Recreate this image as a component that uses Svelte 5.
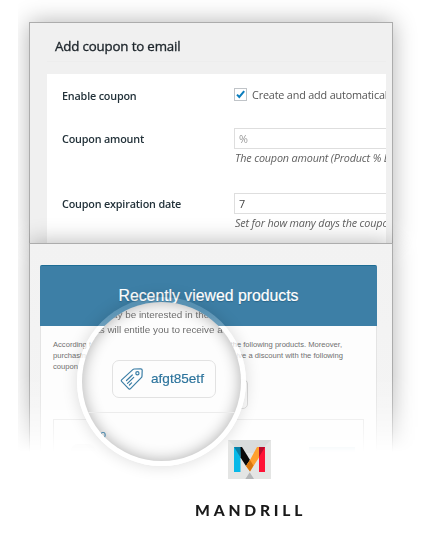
<script>
  const settings = [
    { id: 'enable', label: 'Enable coupon', check: 'Create and add automatical' },
    { id: 'amount', label: 'Coupon amount', value: '%', hint: 'The coupon amount (Product % D', muted: true },
    { id: 'expiry', label: 'Coupon expiration date', value: '7', hint: 'Set for how many days the coupo' }
  ];
</script>

<main>
  <div class="sheets">
    <section class="panel settings">
      <h1><span>Add coupon to email</span></h1>
      <div class="form">
        {#each settings as row (row.id)}
          <div class="row {row.id}">
            <div class="label">{row.label}</div>
            <div class="control">
              {#if row.check}
                <div class="check">
                  <svg width="13" height="13" viewBox="0 0 13 13">
                    <rect x=".5" y=".5" width="12" height="12" fill="#fff" stroke="#c0c4c8" />
                    <path d="M3 6.6 5.3 9 10.2 3.2" fill="none" stroke="#0b7dbd" stroke-width="2" />
                  </svg>
                  <span>{row.check}</span>
                </div>
              {:else}
                <div class="input" class:muted={row.muted}>{row.value}</div>
                <div class="hint">{row.hint}</div>
              {/if}
            </div>
          </div>
        {/each}
      </div>
    </section>

    <section class="panel mail">
      <div class="letter">
        <h2><span>Recently viewed products</span></h2>
        <div class="copy">
          <div class="line"><span>According t</span><span class="b">the following products. Moreover,</span></div>
          <div class="line"><span>purchasing</span><span>eive a discount with the following</span></div>
          <div class="line"><span>coupon</span></div>
        </div>
        <div class="code"></div>
        <div class="products"><i class="thumb"></i><i class="button"></i></div>
      </div>
    </section>
  </div>

  <div class="lens">
    <div class="glass">
      <p class="p1">ay be interested in the</p>
      <p class="p2">ts will entitle you to receive a</p>
      <div class="coupon">
        <svg width="24" height="24" viewBox="0 0 24 24" fill="none" stroke="#3b7ea6" stroke-width="1.2" stroke-linejoin="round" stroke-linecap="round">
          <path d="M1.6 12.9 12.8 2.6Q13.4 2.1 14.2 2L20.7 1.8Q22.2 1.8 22.2 3.2L22 9Q22 10 21.3 10.7L10.3 21.9Q9.6 22.5 8.8 21.8L1.6 14.4Q.9 13.6 1.6 12.9Z" />
          <circle cx="17.4" cy="6.3" r="1.6" />
          <path d="M6.5 13.5 12.3 8M7.5 16.4 13.7 10.4M9.4 18 11.6 15.8" />
        </svg>
        <span>afgt85etf</span>
      </div>
      <hr />
      <p class="p3">o</p>
    </div>
  </div>

  <footer>
    <svg width="43" height="39" viewBox="0 0 43 39">
      <rect width="43" height="39" fill="#e4e5e4" />
      <path d="M0 0H43L30 13H13Z" fill="#d9dcdc" />
      <path d="M6 7H12.5V32H6Z" fill="#08b9e8" />
      <path d="M31 7H37V32H31Z" fill="#ff1236" />
      <path d="M12 7H14L22 20 18 26 12.5 17.5Z" fill="#080808" />
      <path d="M29 7H31V17.5L22 31.5 18 26 22 20Z" fill="#ffa02e" />
      <path d="M22 20 25.4 25.6 22 31.5 18 26Z" fill="#d8760e" />
      <path d="M6 7H12.5V17.5Z" fill="#087fa6" />
      <path d="M37 7H31V17Z" fill="#b90d2c" />
      <path d="M21.7 32.3 26 39H17.4Z" fill="#b4b6b8" />
    </svg>
    <strong>MANDRILL</strong>
  </footer>
</main>

<style>
  :global(body) { background: #fff; }
  main {
    position: relative;
    box-sizing: border-box;
    width: 422px;
    height: 551px;
    overflow: hidden;
    background: #fff;
    font-family: "Open Sans", "Noto Sans", sans-serif;
  }
  h1, h2, p { margin: 0; font-weight: 400; }
  .sheets {
    box-sizing: border-box;
    width: 404px;
    height: 480px;
    margin-left: 18px;
    padding: 22px 0 0 11px;
    overflow: hidden;
    mask-image: linear-gradient(#000 375px, rgba(0,0,0,.82) 405px, rgba(0,0,0,.45) 430px, transparent 452px);
  }
  .panel {
    box-sizing: border-box;
    width: 364px;
    border: 1px solid #acacac;
    box-shadow: 0 0 22px rgba(0,0,0,.3);
    background: #f0f0f0;
  }
  .settings { height: 221px; border-bottom: 0; padding-left: 17px; }
  h1 {
    box-sizing: border-box;
    width: 339px;
    height: 39px;
    margin-bottom: 12px;
    border-bottom: 1px solid #ededed;
    line-height: 46px;
    padding-left: 8px;
    font-size: 13.3px;
    letter-spacing: -.16px;
    color: #1d252b;
    -webkit-text-stroke: .35px #1d252b;
    white-space: nowrap;
  }
  .form {
    width: 339px;
    height: 169px;
    overflow: hidden;
    background: #fff;
    color: #555;
    font-size: 10.8px;
    letter-spacing: -.16px;
    white-space: nowrap;
  }
  .row { display: grid; grid-template-columns: 172px 1fr; padding-left: 15px; }
  .enable { height: 54px; }
  .amount { height: 65px; }
  .label { font-weight: 600; font-size: 10.8px; letter-spacing: -.18px; line-height: 16px; color: #23323a; }
  .enable .label { padding-top: 14px; }
  .amount .label, .expiry .label { padding-top: 3px; }
  .check { display: flex; gap: 5px; padding-top: 14px; line-height: 13px; }
  .input {
    box-sizing: border-box;
    width: 200px;
    height: 21px;
    padding-left: 4px;
    border: 1px solid #dedede;
    line-height: 19px;
    color: #444;
  }
  .muted { color: #999; }
  .hint { padding-left: 1px; margin-top: 1px; font-style: italic; line-height: 16px; color: #606060; letter-spacing: -.16px; }
  .mail {
    position: relative;
    height: 260px;
    padding: 21px 0 0 10px;
    background: linear-gradient(#f2f2f2, #f5f5f5);
  }
  .letter {
    box-sizing: border-box;
    width: 337px;
    height: 240px;
    border: 1px solid #e4e4e4;
    border-top: 0;
    border-radius: 2px 2px 0 0;
    background: #fdfdfd;
    font-family: "Liberation Sans", Arial, sans-serif;
  }
  h2 {
    height: 60px;
    margin: 0 -1px;
    border-top: 1px solid #1d6c94;
    border-radius: 2px 2px 0 0;
    background: #3d7fa6;
    color: #fff;
    font-size: 15.8px;
    line-height: 59px;
    text-align: center;
    text-shadow: 0 1px 1px #286487;
    -webkit-text-stroke: .2px #fff;
    white-space: nowrap;
  }
  .copy { height: 40px; padding: 13px 0 0 12px; font-size: 7.6px; line-height: 11px; color: #707070; white-space: nowrap; }
  .line { display: flex; justify-content: space-between; width: 290px; }
  .b { margin-right: 1px; }
  .code {
    box-sizing: border-box;
    width: 90px;
    height: 30px;
    margin: 0 0 0 117px;
    border: 1px solid #d6d6d6;
    border-radius: 5px;
  }
  .products {
    box-sizing: border-box;
    display: flex;
    justify-content: space-between;
    width: 311px;
    height: 60px;
    margin: 10px 0 0 12px;
    padding: 24px 8px 0 17px;
    border: 1px solid #e6e6e6;
  }
  .thumb { width: 24px; height: 20px; border-radius: 7px; background: #ededed; }
  .button { width: 46px; height: 10px; margin-top: 3px; background: #b9d3e2; }
  .lens {
    position: absolute;
    left: 77px;
    top: 297px;
    box-sizing: border-box;
    width: 169px;
    height: 169px;
    padding: 5px;
    border-radius: 50%;
    background: linear-gradient(rgba(255,255,255,.14) 10px, rgba(255,255,255,.25) 30px, rgba(255,255,255,.75) 50px, #fff 90px);
    box-shadow: 0 0 16px rgba(0,0,0,.14);
    font-family: "Liberation Sans", Arial, sans-serif;
  }
  .glass {
    width: 159px;
    height: 159px;
    overflow: hidden;
    border-radius: 50%;
    background: #fdfdfd;
    box-shadow: inset 0 0 15px rgba(0,0,0,.32);
    color: #6d6d6d;
    font-size: 9.9px;
    line-height: 14.5px;
    white-space: nowrap;
  }
  .p1 { padding: 6px 0 0 30px; }
  .p2 { padding-left: 15px; }
  .coupon {
    display: flex;
    align-items: center;
    gap: 7px;
    box-sizing: border-box;
    width: 104px;
    height: 38px;
    margin: 23px 0 0 30px;
    padding-left: 7px;
    border: 1px solid #e2e2e2;
    border-radius: 7px;
    color: #2b739c;
    font-size: 13.6px;
    -webkit-text-stroke: .15px #2b739c;
  }
  hr { height: 1px; margin: 14px 0 0; border: 0; background: #ececec; }
  .p3 { padding: 14px 0 0 18px; color: #3b7ea6; font-size: 11px; }
  footer {
    position: absolute;
    left: 195px;
    top: 440px;
    display: flex;
    flex-direction: column;
    color: #191919;
  }
  footer svg { margin-left: 33px; }
  strong { font: 900 15.6px/20px Lato, sans-serif; letter-spacing: 3.8px; margin-top: 21px; white-space: nowrap; }
</style>
